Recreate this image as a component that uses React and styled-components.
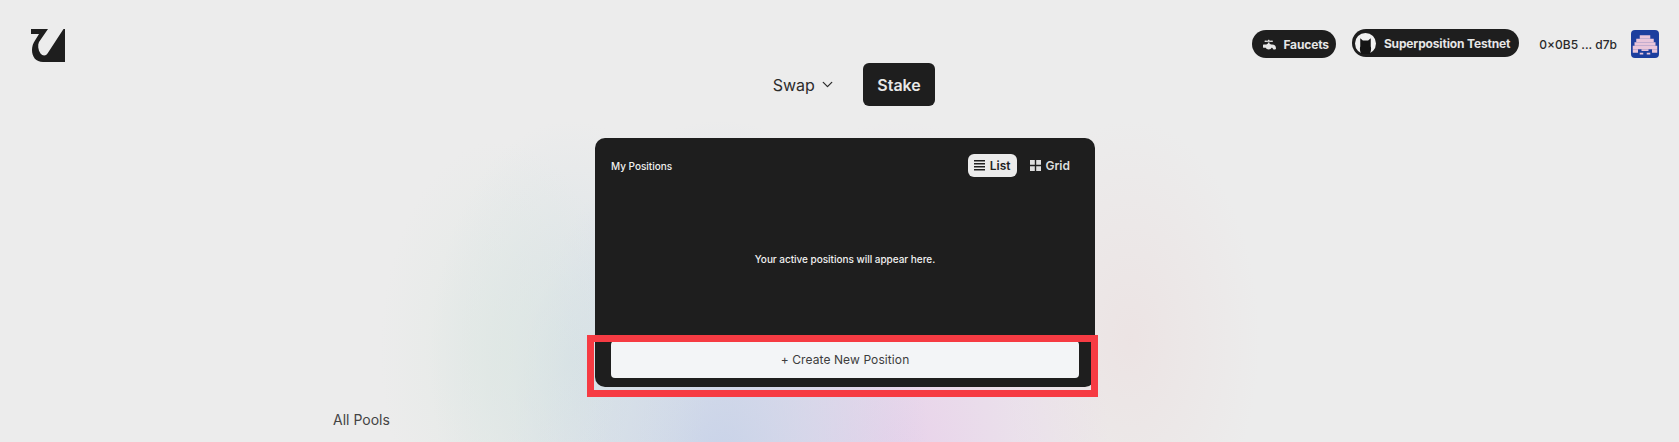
import React from 'react'
import styled, { createGlobalStyle } from 'styled-components'
import { ChevronDown } from 'lucide-react'
import { FaFaucet } from 'react-icons/fa'

const GlobalStyle = createGlobalStyle`
    html, body {
        margin: 0;
        padding: 0;
        height: 100%;
        overflow: hidden;
    }
    body {
        font-family: Inter, "Liberation Sans", sans-serif;
        background-color: #ececec;
    }
    * {
        box-sizing: border-box;
    }
`

const Page = styled.div`
    height: 442px;
    overflow: hidden;
    background-image:
        radial-gradient(ellipse 120px 210px at 500px 350px, rgba(222, 232, 226, 0.6), rgba(222, 232, 226, 0) 100%),
        radial-gradient(ellipse 140px 240px at 570px 360px, rgba(208, 222, 228, 0.7), rgba(208, 222, 228, 0) 100%),
        radial-gradient(ellipse 210px 350px at 720px 470px, rgba(196, 208, 232, 0.9), rgba(196, 208, 232, 0) 100%),
        radial-gradient(ellipse 210px 350px at 900px 470px, rgba(232, 206, 234, 0.9), rgba(232, 206, 234, 0) 100%),
        radial-gradient(ellipse 130px 220px at 1130px 340px, rgba(236, 222, 222, 0.6), rgba(236, 222, 222, 0) 100%);
`

const Header = styled.header`
    display: flex;
    justify-content: space-between;
    align-items: flex-start;
    height: 63px;
    padding: 28px 20px 0 31px;
`

const Logo = styled.svg`
    display: block;
    width: 34px;
    height: 34px;
`

const HeaderRight = styled.div`
    display: flex;
    align-items: center;
    padding-top: 2px;
`

const Pill = styled.div`
    display: flex;
    align-items: center;
    height: 28px;
    padding: ${({ $wide }) => ($wide ? '0 9px 0 3px' : '0 7px 0 11px')};
    margin: ${({ $wide }) => ($wide ? '-2px 20px 0 16px' : '0')};
    gap: ${({ $wide }) => ($wide ? '8px' : '7px')};
    border-radius: 14px;
    background-color: #1e1e1e;
    color: #e6e6e6;
    font-size: 12px;
    font-weight: 700;
    letter-spacing: -0.15px;
    white-space: nowrap;
`

const FaucetIcon = styled(FaFaucet)`
    width: 13px;
    height: 13px;
    color: #e6e6e6;
`

const CatIcon = styled.svg`
    display: block;
    width: 21px;
    height: 21px;
`

const Address = styled.span`
    margin-right: 14px;
    font-size: 12px;
    font-weight: 500;
    color: #2a2a2a;
    white-space: nowrap;
`

const Avatar = styled.svg`
    display: block;
    width: 28px;
    height: 28px;
    border-radius: 4px;
`

const Main = styled.main`
    display: flex;
    flex-direction: column;
    align-items: center;
    width: 1024px;
    margin-left: 333px;
`

const TopNav = styled.nav`
    display: flex;
    gap: 14px;
    height: 43px;
`

const NavSwap = styled.div`
    display: flex;
    align-items: center;
    gap: 4px;
    padding: 0 13px 0 18px;
    font-size: 16px;
    color: #2b2b2b;
`

const NavStake = styled.div`
    display: flex;
    align-items: center;
    padding: 0 14.5px;
    border-radius: 6px;
    background-color: #1e1e1e;
    color: #e8e8e8;
    font-size: 16px;
    font-weight: 600;
`

const Card = styled.section`
    position: relative;
    display: flex;
    flex-direction: column;
    width: 500px;
    height: 248.5px;
    margin-top: 32px;
    padding: 16px;
    border-radius: 10px;
    background-color: #1e1e1e;
`

const CardTop = styled.div`
    display: flex;
    justify-content: space-between;
    align-items: center;
    height: 23px;
`

const CardTitle = styled.h2`
    margin: 0;
    font-size: 10px;
    font-weight: 500;
    letter-spacing: -0.02px;
    color: #f0f0f0;
`

const Toggle = styled.div`
    display: flex;
    align-items: center;
    gap: 6px;
    margin-right: 2px;
`

const ToggleButton = styled.div`
    display: flex;
    align-items: center;
    gap: 5px;
    height: 23px;
    padding: ${({ $active }) => ($active ? '0 6px' : '0 7px')};
    border-radius: 6px;
    background-color: ${({ $active }) => ($active ? '#ebebeb' : 'transparent')};
    color: ${({ $active }) => ($active ? '#1e1e1e' : '#dedede')};
    font-size: 12px;
    font-weight: 600;
`

const ToggleIcon = styled.svg`
    display: block;
    width: 11px;
    height: 11px;
    fill: currentColor;
`

const Empty = styled.div`
    display: flex;
    flex: 1;
    justify-content: center;
    align-items: center;
    font-size: 10px;
    font-weight: 500;
    letter-spacing: -0.03px;
    color: #f0f0f0;
`

const CreateButton = styled.button`
    flex: none;
    width: 468px;
    height: 36.5px;
    margin-bottom: -7px;
    border: 0;
    border-radius: 4px;
    background-color: #f3f5f7;
    color: #3d3d3d;
    font-family: inherit;
    font-size: 12px;
    letter-spacing: 0.1px;
`

const Highlight = styled.div`
    position: absolute;
    left: -8px;
    right: -3px;
    top: 197px;
    bottom: -10.5px;
    border: 7px solid #f63b43;
    pointer-events: none;
`

const PoolsLabel = styled.div`
    align-self: flex-start;
    margin-top: 24px;
    font-size: 14px;
    line-height: 17px;
    color: #444444;
`

const invaderPixels = [
    [5, 3, 6, 2], [3, 5, 10, 2], [2, 7, 12, 2], [1, 9, 14, 2], [1, 11, 3, 2], [6, 11, 4, 1],
    [12, 11, 3, 2], [5, 13, 2, 1], [9, 13, 2, 1],
]

const App = () => {
    return (
        <Page>
            <GlobalStyle />
            <Header>
                <Logo viewBox="0 0 34 34">
                    <path
                        fill="#1e1e1e"
                        d="M0 1H17L8 14C6.500 17 7 22 9.500 25.500C11.500 28 15 28 16.500 25.500L32.500 1H34V34H12C5 34 1 29 1 22C1 18.500 2 15.500 4 12.500L8 6H0Z"
                    />
                </Logo>
                <HeaderRight>
                    <Pill>
                        <FaucetIcon />
                        Faucets
                    </Pill>
                    <Pill $wide>
                        <CatIcon viewBox="0 0 24 24">
                            <circle cx="12" cy="12" r="12" fill="#f2f2f2" />
                            <path fill="#141414" d="M6 6L9 8.500H15L18 6V15C19 18 18 21 17 24H7C6 21 5 18 6 15Z" />
                        </CatIcon>
                        Superposition Testnet
                    </Pill>
                    <Address>0×0B5 ... d7b</Address>
                    <Avatar viewBox="0 0 16 16">
                        <rect width="16" height="16" fill="#1c3f9e" />
                        {invaderPixels.map(([x, y, w, h]) => (
                            <rect key={`${x}-${y}`} x={x} y={y} width={w} height={h} fill="#e9c6da" />
                        ))}
                    </Avatar>
                </HeaderRight>
            </Header>
            <Main>
                <TopNav>
                    <NavSwap>
                        Swap
                        <ChevronDown size={17} strokeWidth={1.8} />
                    </NavSwap>
                    <NavStake>Stake</NavStake>
                </TopNav>
                <Card>
                    <CardTop>
                        <CardTitle>My Positions</CardTitle>
                        <Toggle>
                            <ToggleButton $active>
                                <ToggleIcon viewBox="0 0 11 11">
                                    <path d="M0 0H11V1.600H0ZM0 3H11V4.600H0ZM0 6H11V7.600H0ZM0 9H11V10.600H0Z" />
                                </ToggleIcon>
                                List
                            </ToggleButton>
                            <ToggleButton>
                                <ToggleIcon viewBox="0 0 11 11">
                                    <path d="M0 0H4.800V4.800H0ZM6.200 0H11V4.800H6.200ZM0 6.200H4.800V11H0ZM6.200 6.200H11V11H6.200Z" />
                                </ToggleIcon>
                                Grid
                            </ToggleButton>
                        </Toggle>
                    </CardTop>
                    <Empty>Your active positions will appear here.</Empty>
                    <CreateButton>+ Create New Position</CreateButton>
                    <Highlight />
                </Card>
                <PoolsLabel>All Pools</PoolsLabel>
            </Main>
        </Page>
    )
}

export default App
